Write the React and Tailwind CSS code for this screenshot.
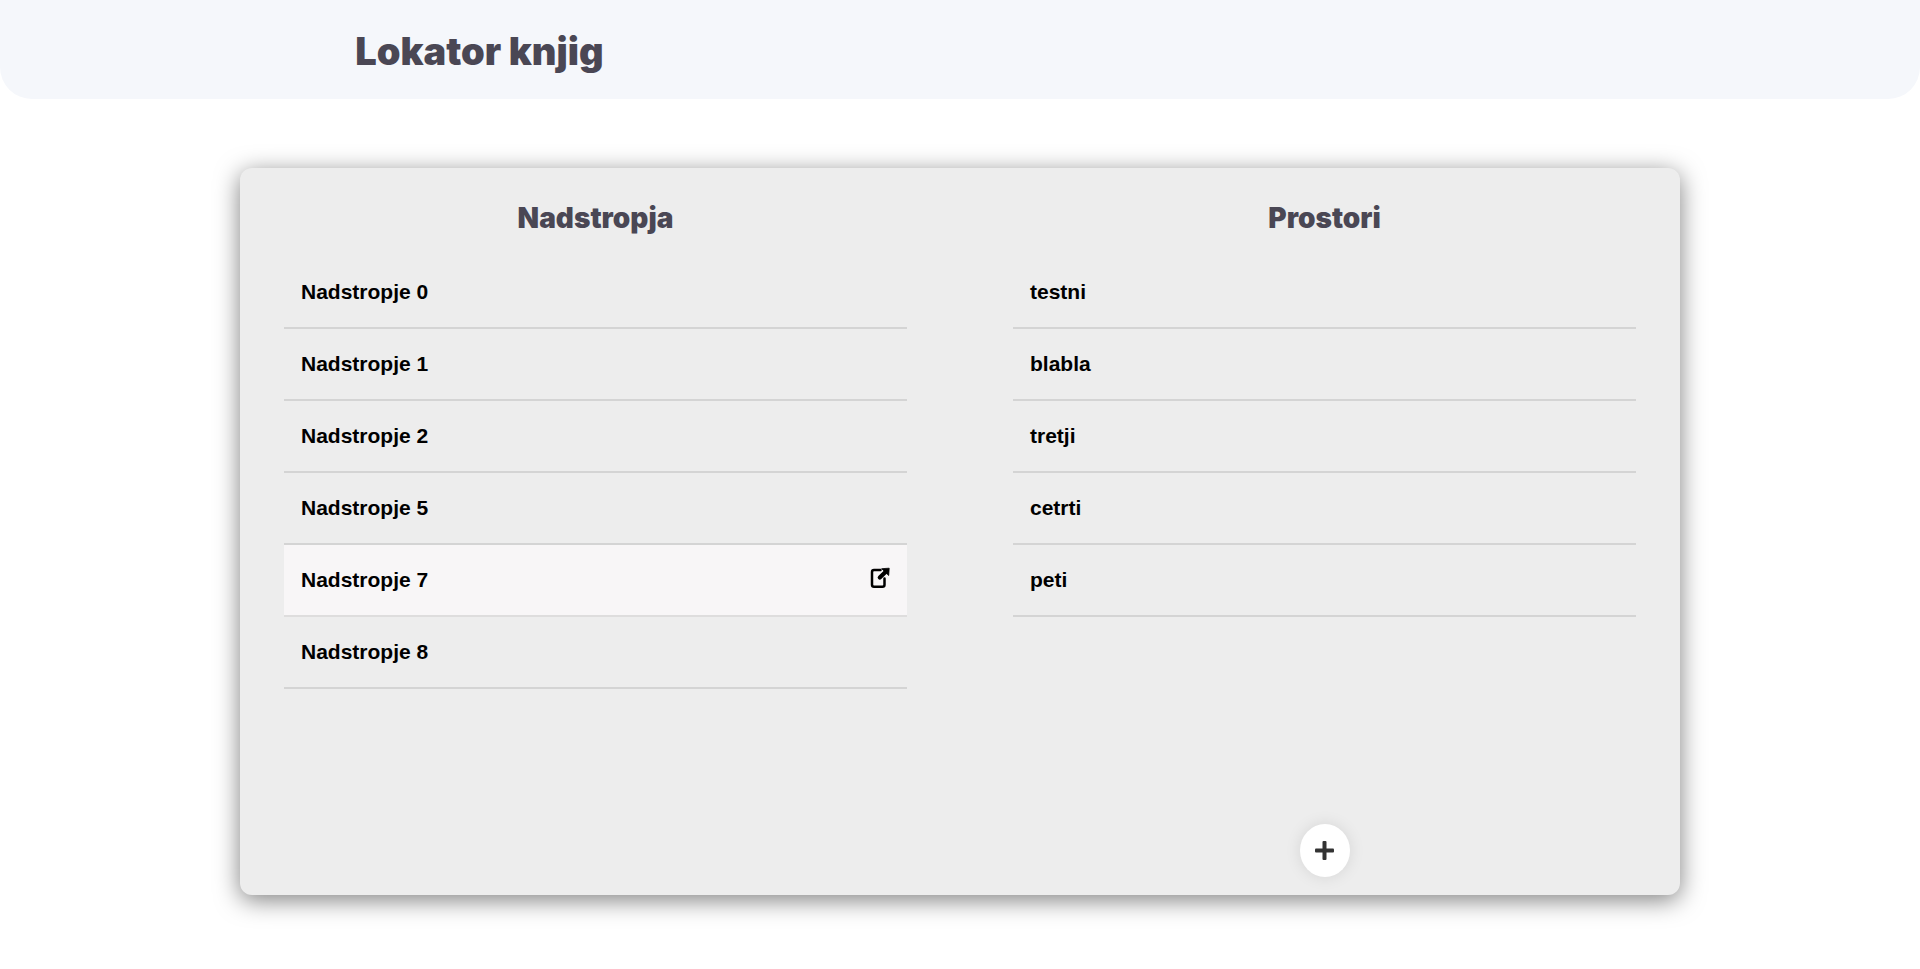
import React from "react";

const floors = ["Nadstropje 0", "Nadstropje 1", "Nadstropje 2", "Nadstropje 5", "Nadstropje 7", "Nadstropje 8"];
const rooms = ["testni", "blabla", "tretji", "cetrti", "peti"];

function OpenIcon() {
  return (
    <svg width="20" height="22" viewBox="0 0 20 22" fill="none" aria-hidden="true">
      <path d="M10.500 3H4A2 2 0 0 0 2 5V17.800A2 2 0 0 0 4 19.800H12.500A2 2 0 0 0 14.500 17.800V11.500" stroke="#000" strokeWidth="2.500" strokeLinecap="round" />
      <path d="M9.800 10.500L15.500 5" stroke="#000" strokeWidth="4.200" strokeLinecap="round" />
      <path d="M11.700 1.700L19.200 1.200L18.700 8.500Z" fill="#000" stroke="#000" strokeWidth=".8" strokeLinejoin="round" />
    </svg>
  );
}

function PlusIcon() {
  return (
    <svg width="19" height="19" viewBox="0 0 19 19" fill="#333" aria-hidden="true">
      <rect x="7.500" y="0" width="4" height="19" rx="1" />
      <rect x="0" y="7.500" width="19" height="4" rx="1" />
    </svg>
  );
}

function List({ title, items, active, action }) {
  return (
    <section className="flex min-w-0 flex-1 flex-col items-center">
      <h2 className="font-['Arial_Black',Inter,sans-serif] text-[28px] leading-[34px] font-black text-[#4a4754]">{title}</h2>
      <ul className="mt-[22px] w-full">
        {items.map((item) => (
          <li
            key={item}
            className={
              "flex h-[72px] items-center justify-between border-b-2 border-black/10 px-[17px] " +
              (item === active ? "bg-[#f8f6f7]" : "")
            }
          >
            <a href="#" className="text-[21px] leading-6 font-bold text-black">{item}</a>
            {item === active && (
              <button type="button" aria-label="Odpri" className="pb-1">
                <OpenIcon />
              </button>
            )}
          </li>
        ))}
      </ul>
      {action}
    </section>
  );
}

export default function App() {
  return (
    <div className="min-h-screen bg-white font-['Liberation_Sans',Arial,sans-serif]">
      <header className="rounded-b-[32px] bg-[#f5f7fb] pt-[30px] pb-[26px]">
        <h1 className="ml-[18.5%] font-['Arial_Black',Inter,sans-serif] text-[38px] leading-[43px] font-black text-[#4a4754]">Lokator knjig</h1>
      </header>
      <main className="mx-auto mt-[69px] flex min-h-[75vh] w-3/4 gap-[106px] rounded-xl bg-[#ededed] px-11 pt-[33px] pb-[18px] shadow-[0_5px_25px_rgba(0,0,0,0.5)]">
        <List title="Nadstropja" items={floors} active="Nadstropje 7" />
        <List
          title="Prostori"
          items={rooms}
          action={
            <button
              type="button"
              aria-label="Dodaj prostor"
              className="mt-auto flex h-[53px] w-[50px] items-center justify-center rounded-[50%] bg-white shadow-[0_0_16px_rgba(0,0,0,0.1)]"
            >
              <PlusIcon />
            </button>
          }
        />
      </main>
    </div>
  );
}
